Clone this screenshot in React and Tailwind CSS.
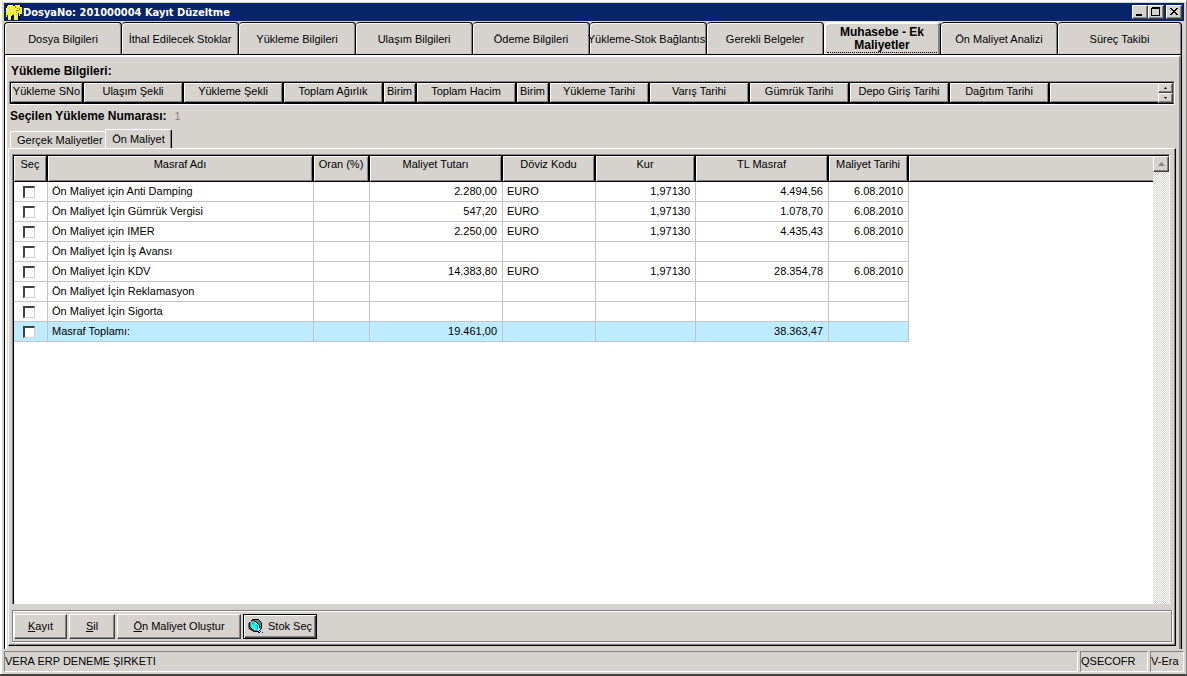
import { useState } from 'react';
import clsx from 'clsx';

const TABS = [
  'Dosya Bilgileri',
  'İthal Edilecek Stoklar',
  'Yükleme Bilgileri',
  'Ulaşım Bilgileri',
  'Ödeme Bilgileri',
  'Yükleme-Stok Bağlantısı',
  'Gerekli Belgeler',
  'Muhasebe - Ek Maliyetler',
  'Ön Maliyet Analizi',
  'Süreç Takibi',
];

const LOADING_COLUMNS = [
  { label: 'Yükleme SNo', width: 'w-[73px]' },
  { label: 'Ulaşım Şekli', width: 'w-[100px]' },
  { label: 'Yükleme Şekli', width: 'w-[100px]' },
  { label: 'Toplam Ağırlık', width: 'w-[100px]' },
  { label: 'Birim', width: 'w-[33px]' },
  { label: 'Toplam Hacim', width: 'w-[100px]' },
  { label: 'Birim', width: 'w-[33px]' },
  { label: 'Yükleme Tarihi', width: 'w-[100px]' },
  { label: 'Varış Tarihi', width: 'w-[100px]' },
  { label: 'Gümrük Tarihi', width: 'w-[100px]' },
  { label: 'Depo Giriş Tarihi', width: 'w-[100px]' },
  { label: 'Dağıtım Tarihi', width: 'w-[100px]' },
];

const COST_COLUMNS = [
  { label: 'Seç', width: 'w-[34px]' },
  { label: 'Masraf Adı', width: 'w-[266px]' },
  { label: 'Oran (%)', width: 'w-[56px]' },
  { label: 'Maliyet Tutarı', width: 'w-[133px]' },
  { label: 'Döviz Kodu', width: 'w-[93px]' },
  { label: 'Kur', width: 'w-[100px]' },
  { label: 'TL Masraf', width: 'w-[133px]' },
  { label: 'Maliyet Tarihi', width: 'w-[80px]' },
];

const COSTS = [
  { name: 'Ön Maliyet için Anti Damping', amount: '2.280,00', currency: 'EURO', rate: '1,97130', tl: '4.494,56', date: '6.08.2010' },
  { name: 'Ön Maliyet İçin Gümrük Vergisi', amount: '547,20', currency: 'EURO', rate: '1,97130', tl: '1.078,70', date: '6.08.2010' },
  { name: 'Ön Maliyet için IMER', amount: '2.250,00', currency: 'EURO', rate: '1,97130', tl: '4.435,43', date: '6.08.2010' },
  { name: 'Ön Maliyet İçin İş Avansı' },
  { name: 'Ön Maliyet İçin KDV', amount: '14.383,80', currency: 'EURO', rate: '1,97130', tl: '28.354,78', date: '6.08.2010' },
  { name: 'Ön Maliyet İçin Reklamasyon' },
  { name: 'Ön Maliyet İçin Sigorta' },
  { name: 'Masraf Toplamı:', amount: '19.461,00', tl: '38.363,47', total: true },
];

// Classic raised / sunken edges
const RAISED = 'border border-t-white border-l-white border-r-[#424142] border-b-[#424142] shadow-[inset_-1px_-1px_#848284]';
const SUNKEN = 'border border-t-[#848284] border-l-[#848284] border-r-white border-b-white';
const HEAD_CELL = 'bg-[#d6d3ce] font-normal border-r-2 border-b border-black shadow-[inset_1px_1px_#fff,inset_-1px_-1px_#848284]';

function ElephantIcon() {
  return (
    <svg width="16" height="16" viewBox="0 0 16 16" shapeRendering="crispEdges" aria-hidden="true">
      <path fill="#000" d="M0 1h2v3H0zM14 1h2v2h-2zM0 12h1v4H0zM5 12h2v4H5zM12 11h2v5h-2z" />
      <path fill="#f7f329" d="M2 1h5v1h2V1h5v2h2v7h-2v2h-1V9h-1v7H8v-5H6v1H5v4H2v-5H1v2H0V4h1V2h1z" />
      <path fill="#fff" d="M3 1h2v1H3zM1 3h1v2H1zM3 6h1v1H3zM5 4h1v1H5zM4 9h1v1H4zM9 5h1v1H9zM8 8h1v1H8zM9 12h1v2H9zM3 12h1v2H3zM5 7h1v1H5zM7 6h1v1H7z" />
      <path fill="#848200" d="M9 2h1v2H9zM10 6h3v1h-3zM13 4h1v2h-1zM11 4h1v1h-1zM7 10h1v1H7zM10 8h1v1h-1z" />
    </svg>
  );
}

function SearchStockIcon() {
  return (
    <svg className="shrink-0" width="16" height="16" viewBox="0 0 16 16" aria-hidden="true">
      <path d="M4.500 .5h6l3 3.500v5l-2.500 3.500H6L1 9.500V4z" fill="#848284" stroke="#000" />
      <path d="M2.500 2.500h4l4.500 4v5H7l-4.500-4z" fill="#00ffff" stroke="#fff" />
      <path d="M2 3v5l4.500 4H10M3 2h4l4.500 4v3" fill="none" stroke="#000" />
      <path d="M8 5.500l1.500 1.500v3M4 4l2 1" fill="none" stroke="#008284" />
      <path d="M10 11h1v1h-1zM12 11h1v1h-1zM11 12h1v1h-1zM13 13h1v1h-1z" fill="#fff" />
      <path d="M11 11h1v1h-1zM12 12h1v1h-1zM10 13h2v1h-2zM14 13h1v1h-1z" fill="#000084" />
    </svg>
  );
}

function CaptionButton({ label, children }) {
  return (
    <button aria-label={label} className={clsx('flex h-[14px] w-4 items-center justify-center bg-[#d6d3ce]', RAISED)}>
      <svg width="10" height="10" viewBox="0 0 10 10" shapeRendering="crispEdges" fill="none" stroke="#000">
        {children}
      </svg>
    </button>
  );
}

function TitleBar() {
  return (
    <header className="flex h-[18px] items-center bg-[#08246b] pr-0.5 pl-0.5 text-white">
      <ElephantIcon />
      <h1 className="ml-px flex-1 font-['DejaVu_Sans_Condensed','DejaVu_Sans',sans-serif] text-[11px] font-bold">
        DosyaNo: 201000004 Kayıt Düzeltme
      </h1>
      <CaptionButton label="Simge durumuna küçült">
        <path d="M1 8h6" strokeWidth="2" />
      </CaptionButton>
      <CaptionButton label="Ekranı kapla">
        <path d="M.5 1.5h8v7h-8zM0 1.5h9M.5 .5h8" />
      </CaptionButton>
      <span className="w-0.5" />
      <CaptionButton label="Kapat">
        <path d="M1 1l7 7M2 1l7 7M8 1l-7 7M9 1l-7 7" shapeRendering="auto" />
      </CaptionButton>
    </header>
  );
}

function MainTabs({ active, onSelect }) {
  return (
    <nav role="tablist" className="mt-px mr-[2px] flex h-8">
      {TABS.map((tab, i) => {
        const selected = i === active;
        return (
          <button
            key={tab}
            role="tab"
            aria-selected={selected}
            onClick={() => onSelect(i)}
            className={clsx(
              'flex min-w-0 basis-0 items-center justify-center rounded-t-[4px] border-t border-r border-black',
              i === TABS.length - 1 ? 'grow-[124]' : 'grow-[117]',
              i === 0 && 'border-l',
              selected
                ? 'border-t-white text-xs leading-[13px] font-bold shadow-[inset_2px_1px_#fff,inset_-2px_0_#848284]'
                : 'whitespace-nowrap shadow-[inset_1px_1px_#fff,inset_-1px_0_#848284]'
            )}
          >
            <span className={clsx(selected ? 'mx-[3px] mt-0.5 flex-1 border-b border-dotted border-black px-2' : 'pt-px')}>{tab}</span>
          </button>
        );
      })}
    </nav>
  );
}

function LoadingGrid() {
  return (
    <div className="mr-px ml-px border border-t-[#848284] border-l-[#848284] border-r-white border-b-white">
      <div className="flex border border-black border-r-[#848284]">
        <table className="h-5 w-full min-w-0 flex-1 table-fixed border-separate border-spacing-0">
          <thead>
            <tr>
              {LOADING_COLUMNS.map((col, i) => (
                <th key={i} className={clsx('p-0 align-top leading-[17px] whitespace-nowrap', HEAD_CELL, col.width)}>
                  {col.label}
                </th>
              ))}
              <th className="border-b border-black bg-[#d6d3ce] p-0 shadow-[inset_1px_1px_#fff,inset_0_-1px_#848284]" />
            </tr>
          </thead>
        </table>
        <div className="flex w-[15px] flex-col">
          <button aria-label="Yukarı" className={clsx('flex flex-1 items-center justify-center', RAISED)}>
            <svg width="3" height="2" viewBox="0 0 3 2"><path d="M0 2l1.500-2L3 2z" /></svg>
          </button>
          <button aria-label="Aşağı" className={clsx('flex flex-1 items-center justify-center', RAISED)}>
            <svg width="3" height="2" viewBox="0 0 3 2"><path d="M0 0h3L1.500 2z" /></svg>
          </button>
        </div>
      </div>
    </div>
  );
}

function CostGrid() {
  const cell = 'border-r border-b border-[#c6c3c6] pr-[5px] pl-1 py-0';

  return (
    <div className="mr-0.5 flex min-h-0 flex-1 border-t border-r border-l border-[#848284] border-r-white">
      <div className="flex min-w-0 flex-1 border-t border-l border-black bg-white">
        <div className="min-w-0 flex-1">
          <table className="w-full table-fixed border-separate border-spacing-0">
            <thead>
              <tr className="h-[26px]">
                {COST_COLUMNS.map(col => (
                  <th key={col.label} className={clsx('p-0 align-top leading-[17px] whitespace-nowrap', HEAD_CELL, col.width)}>
                    {col.label}
                  </th>
                ))}
                <th className="border-b border-black bg-[#d6d3ce] p-0 shadow-[inset_1px_1px_#fff,inset_0_-1px_#848284]" />
              </tr>
            </thead>
            <tbody>
              {COSTS.map(cost => (
                <tr key={cost.name} className={clsx('h-5', cost.total && '[&>td:not(:last-child)]:bg-[#bdebff]')}>
                  <td className={cell}>
                    <input
                      type="checkbox"
                      aria-label={cost.name}
                      className="ml-[5px] block size-3 appearance-none border border-t-2 border-l-2 border-t-[#424142] border-r-[#d6d3ce] border-b-[#d6d3ce] border-l-[#424142] bg-white checked:bg-black"
                    />
                  </td>
                  <td className={cell}>{cost.name}</td>
                  <td className={cell} />
                  <td className={clsx(cell, 'text-right')}>{cost.amount}</td>
                  <td className={cell}>{cost.currency}</td>
                  <td className={clsx(cell, 'text-right')}>{cost.rate}</td>
                  <td className={clsx(cell, 'text-right')}>{cost.tl}</td>
                  <td className={clsx(cell, 'text-right')}>{cost.date}</td>
                  <td className="p-0" />
                </tr>
              ))}
            </tbody>
          </table>
        </div>
        {/* Scroll bar */}
        <div className="w-4 bg-[repeating-conic-gradient(#fff_0_25%,#d6d3ce_0_50%)] bg-[length:2px_2px]">
          <button aria-label="Yukarı kaydır" className={clsx('flex h-4 w-full items-center justify-center bg-[#d6d3ce]', RAISED)}>
            <svg width="7" height="4" viewBox="0 0 7 4" fill="#848284"><path d="M0 4l3.500-4L7 4z" /></svg>
          </button>
        </div>
      </div>
    </div>
  );
}

function Toolbar() {
  const button = clsx('flex h-[25px] items-center justify-center', RAISED);

  return (
    <div className="mt-1.5 border border-[#848284] shadow-[inset_1px_1px_#fff,0_1px_#fff,1px_0_#fff]">
      <div className="flex gap-0.5 px-px pt-[3px] pb-[2px]">
        <button className={clsx(button, 'w-[53px]')}><span><u>K</u>ayıt</span></button>
        <button className={clsx(button, 'w-[46px]')}><span><u>S</u>il</span></button>
        <button className={clsx(button, 'w-[124px]')}><span><u>Ö</u>n Maliyet Oluştur</span></button>
        <button className="flex h-[25px] w-[74px] items-center justify-center gap-1 border border-black shadow-[inset_1px_1px_#fff,inset_-1px_-1px_#424142,inset_-2px_-2px_#848284]">
          <SearchStockIcon />
          <span className="whitespace-nowrap">Stok Seç</span>
        </button>
      </div>
    </div>
  );
}

function SubTab({ selected, onClick, children }) {
  return (
    <button
      role="tab"
      aria-selected={selected}
      onClick={onClick}
      className={clsx(
        'rounded-t-[2px] border-t border-l border-white px-1.5 whitespace-nowrap',
        selected
          ? '-mb-px h-5 w-[67px] border-r border-r-black bg-[#d6d3ce] pb-px shadow-[inset_-1px_0_#848284]'
          : 'h-[17px] w-[95px]'
      )}
    >
      {children}
    </button>
  );
}

export default function App() {
  const [tab, setTab] = useState(7);
  const [subTab, setSubTab] = useState(1);

  return (
    <div className="flex h-screen flex-col border-r border-b-2 border-[#848284] border-b-[#424142] bg-[#d6d3ce] pt-[3px] pr-0.5 pb-0.5 pl-1 font-['Liberation_Sans',Arial,sans-serif] text-[11px] leading-[13px] text-black shadow-[inset_2px_2px_#fff]">
      <TitleBar />
      <MainTabs active={tab} onSelect={setTab} />

      <main className="mr-[2px] flex min-h-0 flex-1 flex-col border-t border-r border-l border-black">
        <div className="flex min-h-0 flex-1 flex-col border-t-2 border-r-2 border-l-2 border-white border-r-[#848284] pr-[3px] pl-px">
          <h2 className="mt-2 mb-[3px] ml-[3px] text-xs leading-[13px] font-bold">Yükleme Bilgileri:</h2>
          <LoadingGrid />

          <div className="mt-[5px] ml-0.5 flex gap-2">
            <b className="text-xs leading-[13px]">Seçilen Yükleme Numarası:</b>
            <span className="text-[#848284]">1</span>
          </div>

          <div role="tablist" className="mt-1.5 ml-0.5 flex items-end">
            <SubTab selected={subTab === 0} onClick={() => setSubTab(0)}>Gerçek Maliyetler</SubTab>
            <SubTab selected={subTab === 1} onClick={() => setSubTab(1)}>Ön Maliyet</SubTab>
          </div>

          <section className="flex min-h-0 flex-1 flex-col border border-t-white border-r-black border-b-black border-l-white pt-[5px] pr-[3px] pb-[3px] pl-[3px] shadow-[inset_-1px_-1px_#848284]">
            <CostGrid />
            <Toolbar />
          </section>
          <div className="h-[3px]" />
        </div>
      </main>

      <footer className="mt-0.5 flex h-[21px] gap-0.5 leading-[18px]">
        <div className={clsx('min-w-0 flex-1', SUNKEN)}>VERA ERP DENEME ŞIRKETI</div>
        <div className={clsx('w-[68px]', SUNKEN)}>QSECOFR</div>
        <div className={clsx('w-[34px] whitespace-nowrap', SUNKEN)}>V-Era</div>
      </footer>
    </div>
  );
}
